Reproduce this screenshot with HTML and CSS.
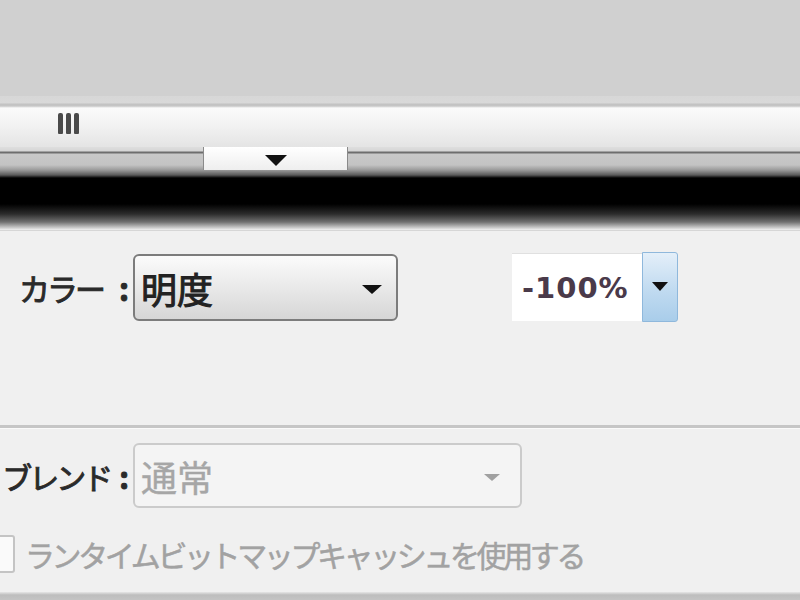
FILE: index.html
```html
<!DOCTYPE html>
<html lang="ja">
<head>
    <meta charset="UTF-8">
    <title>プロパティ</title>
    <link rel="stylesheet" href="styles.css">
</head>
<body>

<div class="stage"></div>

<div class="hbar">
    <div class="grip"><span></span><span></span><span></span></div>
</div>

<div class="tabbar">
    <div class="tab"><span class="tri"></span></div>
</div>

<div class="shade"></div>

<div class="panel">
    <div class="row row-color">
        <div class="label">カラー<span class="colon">:</span></div>
        <div class="select">
            <span class="value">明度</span>
            <span class="arrow"></span>
        </div>
        <div class="spin">
            <div class="num">-100%</div>
            <div class="spin-btn"><span class="arrow"></span></div>
        </div>
    </div>

    <div class="divider"></div>

    <div class="row row-blend">
        <div class="label">ブレンド<span class="colon">:</span></div>
        <div class="select disabled">
            <span class="value">通常</span>
            <span class="arrow"></span>
        </div>
    </div>

    <div class="row row-cache">
        <span class="check"></span>
        <span class="check-text">ランタイムビットマップキャッシュを使用する</span>
    </div>

    <div class="bottom-line"></div>
</div>

</body>
</html>
```

FILE: styles.css
```css
html, body {
    margin: 0;
    padding: 0;
    width: 800px;
    height: 600px;
    overflow: hidden;
    background-color: #f0f0f0;
    font-family: "Noto Sans CJK JP", "DejaVu Sans", sans-serif;
}

/* 上部のグレー領域 */
.stage {
    height: 96px;
    background-color: #d0d0d0;
}

/* 横スクロールバー */
.hbar {
    height: 51px;
    box-sizing: border-box;
    padding: 17px 0 0 58px;
    background: linear-gradient(#d7d7d7 0, #d9d9d9 7px, #c2c2c2 8px, #c6c6c6 10px, #fbfbfb 12px, #f3f3f3 28px, #e4e4e4 51px);
}
.grip {
    display: flex;
    gap: 3px;
}
.grip span {
    width: 5px;
    height: 21px;
    border-radius: 2px 2px 1px 1px;
    background-color: #4a4a4a;
}

/* タブのバー */
.tabbar {
    height: 31px;
    background: linear-gradient(#dedede 0, #d6d6d6 4px, #6e6e6e 5px, #6e6e6e 6px, #c9c9c9 7px, #c3c3c3 18px, #9a9a9a 23px, #5a5a5a 28px, #000 31px);
}
.tab {
    margin-left: 203px;
    width: 145px;
    height: 23px;
    box-sizing: border-box;
    border-left: 1px solid #8a8a8a;
    border-right: 1px solid #8a8a8a;
    background: linear-gradient(#ffffff, #eeeeee);
    display: flex;
    justify-content: center;
    padding-top: 8px;
}
.tab .tri {
    width: 0;
    height: 0;
    border-left: 11px solid transparent;
    border-right: 11px solid transparent;
    border-top: 11px solid #111;
}

/* 黒い影 */
.shade {
    height: 52px;
    background: linear-gradient(#000 0, #000 26px, #2c2c2c 36px, #707070 44px, #cfcfcf 50px, #f0f0f0 52px);
}

/* プロパティパネル */
.panel {
    height: 370px;
    box-sizing: border-box;
    padding-top: 22px;
    border-top: 1px solid #d6d6d6;
    background-color: #f0f0f0;
    position: relative;
}
.row {
    display: flex;
    align-items: center;
}
.label {
    width: 133px;
    flex: none;
    display: flex;
    justify-content: flex-end;
    align-items: baseline;
    box-sizing: border-box;
    padding-right: 4px;
    white-space: nowrap;
    font-size: 31px;
    letter-spacing: -3px;
    color: #2a2a2a;
    -webkit-text-stroke: 0.9px #2a2a2a;
}
.label .colon {
    margin-left: 16px;
    letter-spacing: 0;
    font-weight: bold;
}
.row-blend .label {
    font-size: 30px;
}
.row-blend .label .colon {
    margin-left: 9px;
}

.select {
    width: 265px;
    height: 67px;
    box-sizing: border-box;
    border: 2px solid #7c7c7c;
    border-radius: 6px;
    background: linear-gradient(#fbfbfb, #e9e9e9 50%, #d6d6d6);
    display: flex;
    align-items: center;
    justify-content: space-between;
    padding: 0 14px 0 6px;
}
.select .value {
    font-size: 36px;
    color: #222;
    line-height: 1;
    -webkit-text-stroke: 1px #222;
}
.select .arrow {
    width: 0;
    height: 0;
    border-left: 10px solid transparent;
    border-right: 10px solid transparent;
    border-top: 9px solid #111;
    margin-top: 3px;
}

/* 数値フィールド */
.spin {
    display: flex;
    margin-left: 114px;
    align-items: stretch;
}
.num {
    width: 130px;
    height: 68px;
    box-sizing: border-box;
    border-top: 1px solid #e0e0e0;
    background-color: #fff;
    display: flex;
    align-items: center;
    padding-left: 10px;
    font-family: "DejaVu Sans", sans-serif;
    font-size: 29px;
    font-weight: bold;
    letter-spacing: 1px;
    color: #4a3a4a;
}
.spin-btn {
    width: 36px;
    height: 70px;
    margin-top: -1px;
    box-sizing: border-box;
    border: 1px solid #8fb8dc;
    border-radius: 0 3px 3px 0;
    background: linear-gradient(#e4eff9, #c3dcf1 50%, #a9cdea);
    display: flex;
    justify-content: center;
    padding-top: 29px;
}
.spin-btn .arrow {
    width: 0;
    height: 0;
    border-left: 8px solid transparent;
    border-right: 8px solid transparent;
    border-top: 9px solid #111;
}

.divider {
    margin-top: 103px;
    height: 3px;
    background-color: #c6c6c6;
    border-bottom: 1px solid #fafafa;
}

/* ブレンド */
.row-blend {
    margin-top: 14px;
}
.select.disabled {
    width: 389px;
    height: 65px;
    border-color: #cbcbcb;
    background: #f4f4f4;
    padding-right: 20px;
}
.select.disabled .value {
    color: #a6a6a6;
    -webkit-text-stroke: 0.4px #a6a6a6;
}
.select.disabled .arrow {
    border-left-width: 8px;
    border-right-width: 8px;
    border-top: 7px solid #a0a0a0;
}

/* チェックボックス */
.row-cache {
    margin-top: 24px;
}
.check {
    width: 38px;
    height: 38px;
    margin-left: -23px;
    box-sizing: border-box;
    border: 2px solid #c4c4c4;
    border-radius: 3px;
    background-color: #fafafa;
    flex: none;
}
.check-text {
    margin-left: 10px;
    font-size: 30px;
    letter-spacing: -3.4px;
    color: #a2a2a2;
    white-space: nowrap;
    -webkit-text-stroke: 0.5px #a2a2a2;
}

.bottom-line {
    position: absolute;
    left: 0;
    right: 0;
    bottom: 0;
    height: 8px;
    background: linear-gradient(#e6e6e6, #bdbdbd 3px, #c4c4c4);
}
```
